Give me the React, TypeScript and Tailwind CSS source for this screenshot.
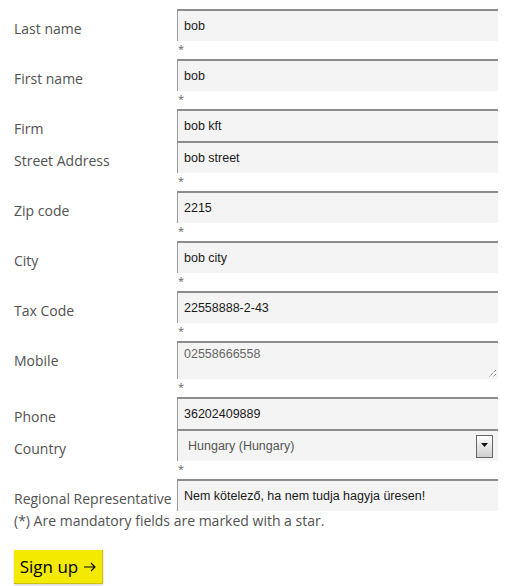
const fields: {
  label: string;
  value: string;
  required: boolean;
  kind?: 'text' | 'textarea' | 'select';
}[] = [
  { label: 'Last name', value: 'bob', required: true },
  { label: 'First name', value: 'bob', required: true },
  { label: 'Firm', value: 'bob kft', required: false },
  { label: 'Street Address', value: 'bob street', required: true },
  { label: 'Zip code', value: '2215', required: true },
  { label: 'City', value: 'bob city', required: true },
  { label: 'Tax Code', value: '22558888-2-43', required: true },
  { label: 'Mobile', value: '02558666558', required: true, kind: 'textarea' },
  { label: 'Phone', value: '36202409889', required: false },
  { label: 'Country', value: 'Hungary (Hungary)', required: true, kind: 'select' },
  { label: 'Regional Representative', value: 'Nem kötelező, ha nem tudja hagyja üresen!', required: false },
];

function Field({ value, kind = 'text' }: { value: string; kind?: 'text' | 'textarea' | 'select' }) {
  const base =
    "w-[321px] bg-[#f4f4f4] border-t-2 border-l border-t-[#8c8c8c] border-l-[#9a9a9a] font-['Liberation_Sans',Arial,sans-serif] text-[12.5px]";

  if (kind === 'textarea') {
    return (
      <div className={`${base} relative h-[38px] pl-[6px] pt-[3px] leading-[16px] text-[#666]`}>
        {value}
        <svg className="absolute right-[1px] bottom-[1px]" width="9" height="9" viewBox="0 0 9 9">
          <path d="M8 1 L1 8 M8 5 L5 8" stroke="#555" strokeWidth="1" strokeDasharray="1 1" />
        </svg>
      </div>
    );
  }

  if (kind === 'select') {
    return (
      <div className={`${base} h-[32px] flex items-center justify-between pl-[10px] pr-[5px] text-[#555]`}>
        <span>{value}</span>
        <div className="w-[17px] h-[23px] border border-[#666] bg-gradient-to-b from-white to-[#cfcfcf] flex items-center justify-center">
          <svg width="7" height="4" viewBox="0 0 7 4" className="mb-[2px]">
            <path d="M0 0 H7 L3.5 4 Z" fill="#111" />
          </svg>
        </div>
      </div>
    );
  }

  return (
    <div className={`${base} h-[32px] flex items-center pl-[6px] text-[#1a1a1a]`}>
      {value}
    </div>
  );
}

export default function App() {
  return (
    <div className="w-[529px] min-h-[586px] bg-white pt-[9px] font-['Open_Sans','DejaVu_Sans',sans-serif] text-[#525252]">
      {fields.map((f) => (
        <div key={f.label} className="flex">
          <div className="w-[177px] pl-[14px] pt-[11px] text-[14px] leading-[18px] whitespace-nowrap">
            {f.label}
          </div>
          <div className="flex flex-col">
            <Field value={f.value} kind={f.kind} />
            {f.required && (
              <div className="h-[18px] pl-[1px] text-[11px] leading-[16px] text-[#666]">*</div>
            )}
          </div>
        </div>
      ))}

      <p className="pl-[14px] text-[14px] leading-[18px] mt-[1px]">
        (*) Are mandatory fields are marked with a star.
      </p>

      <button className="ml-[14px] mt-[20px] w-[89px] h-[34px] bg-[#f4ea00] border-b border-r border-[#c9c000] shadow-[0_1px_2px_rgba(0,0,0,0.2)] text-[17px] text-black flex items-center justify-center gap-[6px]">
        <span>Sign up</span>
        <svg width="12" height="10" viewBox="0 0 12 10" className="mt-[1px]">
          <path d="M0 5 H11 M7 1 L11 5 L7 9" stroke="#000" strokeWidth="1.1" fill="none" />
        </svg>
      </button>
    </div>
  );
}
